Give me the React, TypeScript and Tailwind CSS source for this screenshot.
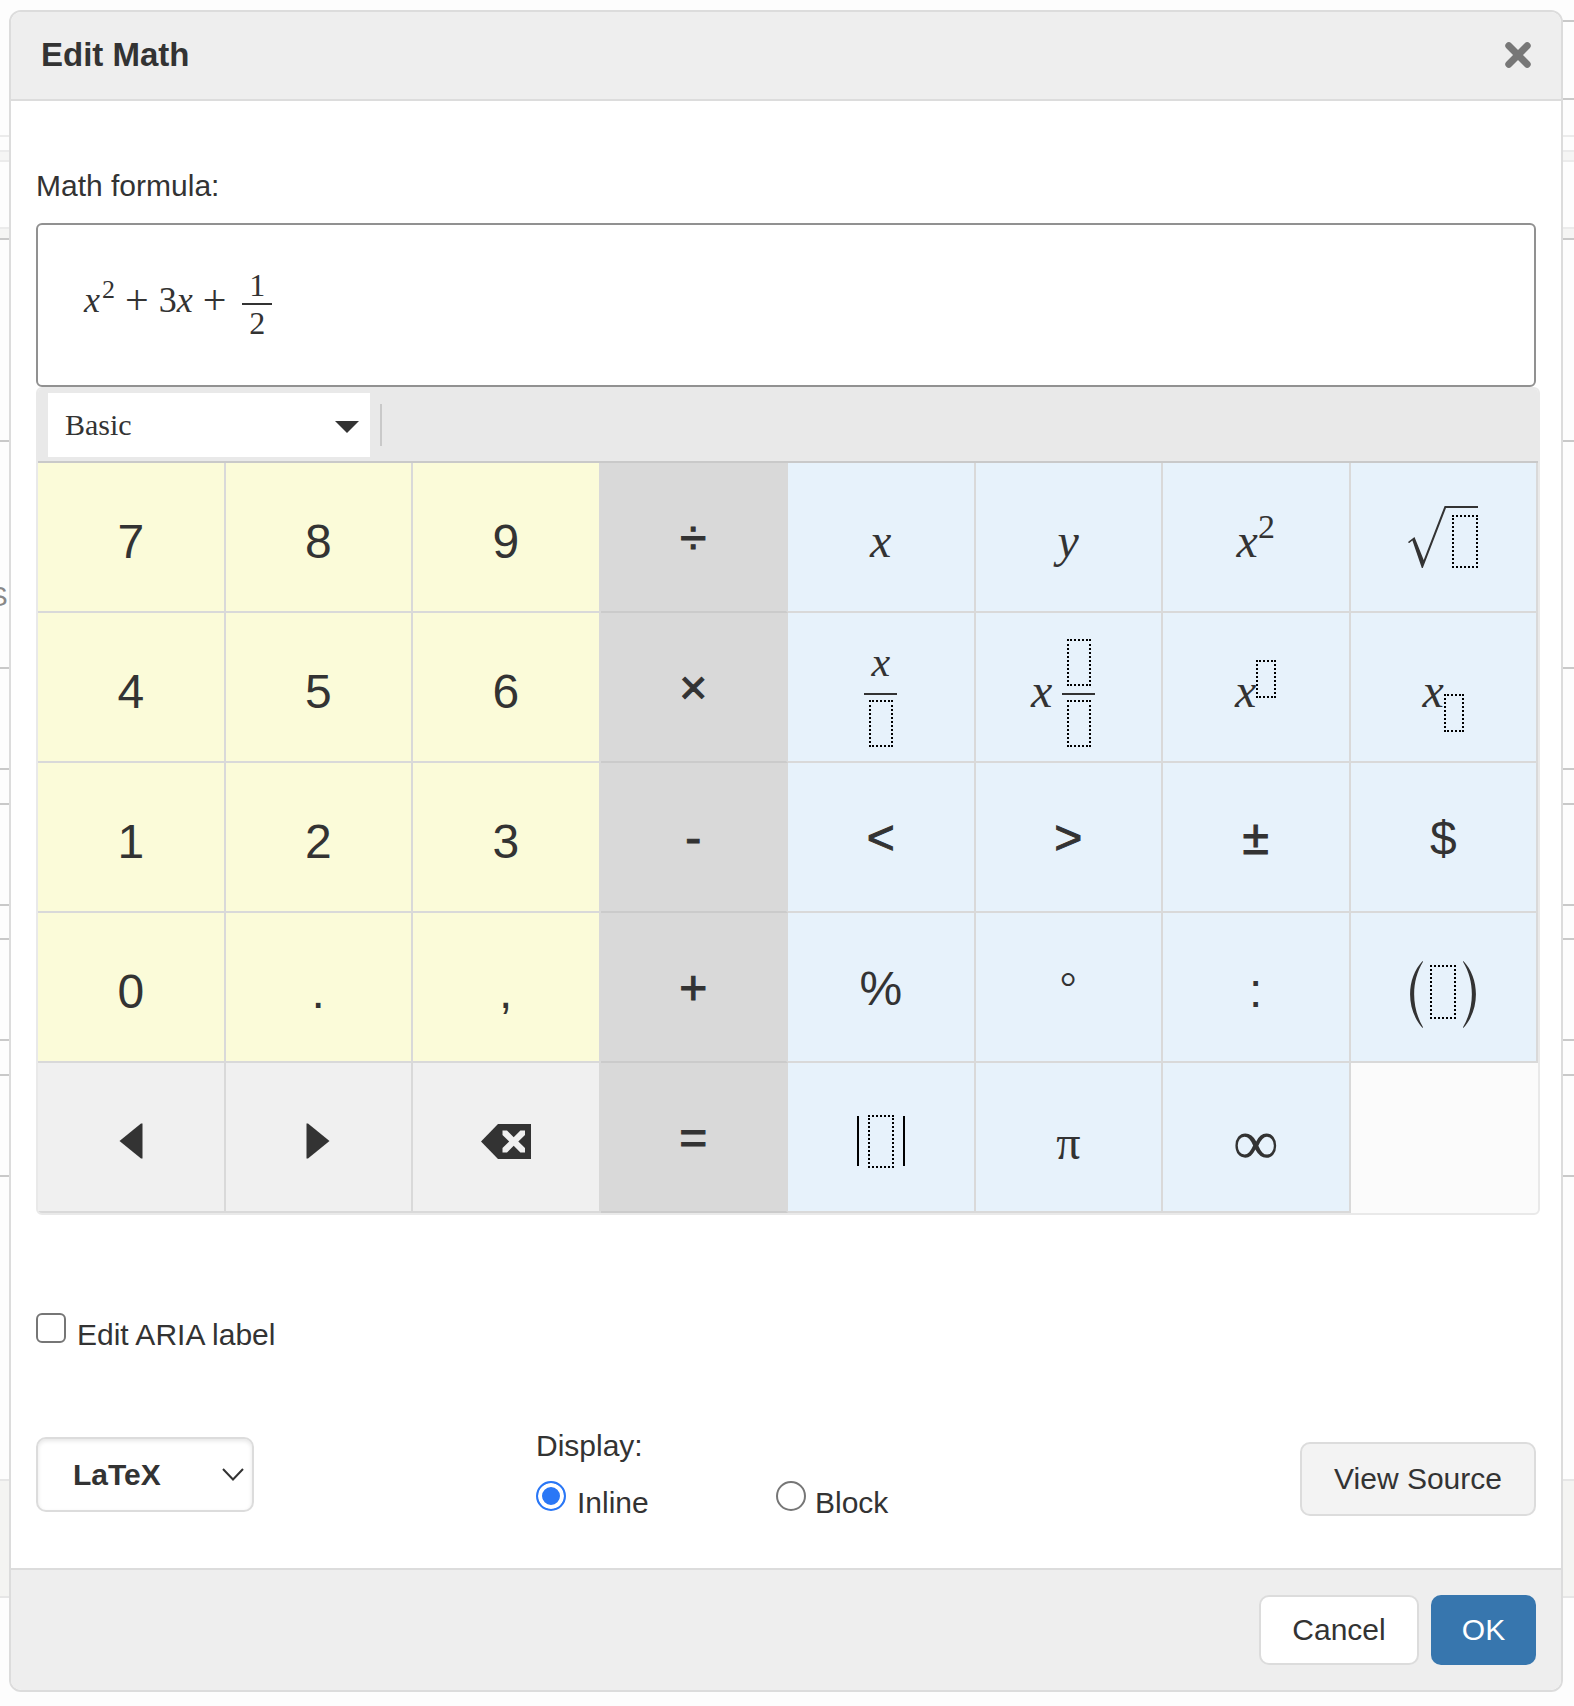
import React, { useState } from 'react';

interface KeyDef {
  id: string;
  label: React.ReactNode;
  kind: 'digit' | 'operator' | 'symbol' | 'nav';
}

const kindStyles = {
  digit: 'bg-[#fbfbd9] border-[#d9d9d9] pt-[10px]',
  operator: 'bg-[#d9d9d9] border-r-[#d9d9d9] border-b-[#cbcbcb]',
  symbol: 'bg-[#e7f2fb] border-[#d9d9d9]',
  nav: 'bg-[#f0f0f0] border-[#d9d9d9] pt-2',
};

const Serif = ({ children, className = '' }: { children: React.ReactNode; className?: string }) => (
  <span className={`font-['Liberation_Serif',serif] ${className}`}>{children}</span>
);

const Sign = ({ children }: { children: React.ReactNode }) => (
  <span className="pt-[2px] [-webkit-text-stroke:1px_#333]">{children}</span>
);

const Slot = ({ className }: { className: string }) => (
  <span className={`block shrink-0 border-2 border-dotted border-black ${className}`} />
);

const SqrtKey = () => (
  <span className="flex items-end">
    <svg width="38" height="62" viewBox="0 0 38 62" fill="#333">
      <path d="M0 36 L6.5 31 L15.7 54 L36.6 0 H38 V2 L14.8 62 H13.8 L4.4 34.5 L1 37.2 Z" />
    </svg>
    <span className="block h-[62px] border-t-2 border-[#333] pt-[7px] pl-[6px]">
      <Slot className="h-[53px] w-[26px]" />
    </span>
  </span>
);

const Fraction = ({ top }: { top: React.ReactNode }) => (
  <span className="flex flex-col items-center">
    {top}
    <span className="mt-[7px] mb-[5px] block h-[2px] w-[33px] bg-[#333]" />
    <Slot className="h-[47px] w-6" />
  </span>
);

const ParenKey = () => (
  <span className="flex items-center gap-[7px] pt-[14px]">
    <svg width="13" height="67" viewBox="0 0 13 67" fill="#333">
      <path d="M12.6 0 C-3.6 17 -4.6 48 12.6 67 L13 66.3 C1.2 46 1.2 20 13 0.8 Z" />
    </svg>
    <Slot className="mb-1 h-[54px] w-[26px]" />
    <svg width="13" height="67" viewBox="0 0 13 67" fill="#333">
      <path d="M0.4 0 C16.6 17 17.6 48 0.4 67 L0 66.3 C11.8 46 11.8 20 0 0.8 Z" />
    </svg>
  </span>
);

const AbsKey = () => (
  <span className="flex items-center gap-[9px] pt-2">
    <span className="block h-[50px] w-[2px] bg-black" />
    <Slot className="h-[53px] w-[26px]" />
    <span className="block h-[50px] w-[2px] bg-black" />
  </span>
);

const LeftArrow = () => (
  <svg width="24" height="36" viewBox="0 0 24 36" fill="#333">
    <path d="M23.5 0.5 V35.5 H22 L0.5 18 L22 0.5 Z" />
  </svg>
);

const RightArrow = () => (
  <svg width="24" height="36" viewBox="0 0 24 36" fill="#333">
    <path d="M0.5 0.5 V35.5 H2 L23.5 18 L2 0.5 Z" />
  </svg>
);

const BackspaceIcon = () => (
  <svg width="50" height="35" viewBox="0 0 50 35">
    <path d="M0 17.5 L17 0 H50 V35 H17 Z" fill="#333" />
    <path
      d="M21.5 6.5 H26 L32.7 13.2 L39.4 6.5 H44 V11 L37.3 17.5 L44 24 V28.5 H39.4 L32.7 21.8 L26 28.5 H21.5 V24 L28.2 17.5 L21.5 11 Z"
      fill="#f0f0f0"
    />
  </svg>
);

const keys: KeyDef[] = [
  { id: '7', label: '7', kind: 'digit' },
  { id: '8', label: '8', kind: 'digit' },
  { id: '9', label: '9', kind: 'digit' },
  { id: 'divide', label: <Sign>÷</Sign>, kind: 'operator' },
  { id: 'x', label: <Serif className="pt-2 italic">x</Serif>, kind: 'symbol' },
  { id: 'y', label: <Serif className="pt-2 italic">y</Serif>, kind: 'symbol' },
  {
    id: 'x squared',
    label: (
      <span className="flex items-center pt-2">
        <Serif className="italic">x</Serif>
        <Serif className="pb-7 text-[34px]">2</Serif>
      </span>
    ),
    kind: 'symbol',
  },
  { id: 'square root', label: <SqrtKey />, kind: 'symbol' },

  { id: '4', label: '4', kind: 'digit' },
  { id: '5', label: '5', kind: 'digit' },
  { id: '6', label: '6', kind: 'digit' },
  { id: 'multiply', label: <Sign>×</Sign>, kind: 'operator' },
  {
    id: 'fraction',
    label: (
      <span className="pt-3">
        <Fraction top={<Serif className="h-[47px] text-[42px] leading-[47px] italic">x</Serif>} />
      </span>
    ),
    kind: 'symbol',
  },
  {
    id: 'mixed fraction',
    label: (
      <span className="flex items-center gap-[10px] pt-3 pr-[10px]">
        <Serif className="pb-1 italic">x</Serif>
        <Fraction top={<Slot className="h-[47px] w-6" />} />
      </span>
    ),
    kind: 'symbol',
  },
  {
    id: 'superscript',
    label: (
      <span className="flex items-center pt-2">
        <Serif className="italic">x</Serif>
        <Slot className="mb-6 h-[38px] w-5" />
      </span>
    ),
    kind: 'symbol',
  },
  {
    id: 'subscript',
    label: (
      <span className="flex items-center pt-2">
        <Serif className="italic">x</Serif>
        <Slot className="mt-11 h-[38px] w-5" />
      </span>
    ),
    kind: 'symbol',
  },

  { id: '1', label: '1', kind: 'digit' },
  { id: '2', label: '2', kind: 'digit' },
  { id: '3', label: '3', kind: 'digit' },
  { id: 'minus', label: <Sign>-</Sign>, kind: 'operator' },
  { id: 'less than', label: <Sign>&lt;</Sign>, kind: 'symbol' },
  { id: 'greater than', label: <Sign>&gt;</Sign>, kind: 'symbol' },
  { id: 'plus or minus', label: <Sign>±</Sign>, kind: 'symbol' },
  { id: 'dollar', label: <span className="pt-1">$</span>, kind: 'symbol' },

  { id: '0', label: '0', kind: 'digit' },
  { id: 'point', label: '.', kind: 'digit' },
  { id: 'comma', label: ',', kind: 'digit' },
  { id: 'plus', label: <Sign>+</Sign>, kind: 'operator' },
  { id: 'percent', label: <span className="pt-1">%</span>, kind: 'symbol' },
  { id: 'degree', label: <Serif className="text-[42px]">°</Serif>, kind: 'symbol' },
  { id: 'colon', label: <span className="pt-2">:</span>, kind: 'symbol' },
  { id: 'parentheses', label: <ParenKey />, kind: 'symbol' },

  { id: 'move left', label: <LeftArrow />, kind: 'nav' },
  { id: 'move right', label: <RightArrow />, kind: 'nav' },
  { id: 'backspace', label: <BackspaceIcon />, kind: 'nav' },
  { id: 'equals', label: <Sign>=</Sign>, kind: 'operator' },
  { id: 'absolute value', label: <AbsKey />, kind: 'symbol' },
  { id: 'pi', label: <Serif className="pt-3">π</Serif>, kind: 'symbol' },
  { id: 'infinity', label: <Serif className="pt-3 text-[64px]">∞</Serif>, kind: 'symbol' },
];

// Form behind the dialog, only its edges stay visible
const Backdrop = () => (
  <div aria-hidden="true" className="absolute inset-0 flex flex-col overflow-hidden">
    <div className="ml-auto flex h-[135px] w-1/2 flex-col pt-5">
      <div className="h-20 border-y-2 border-[#c9c9c9]" />
    </div>
    <div className="h-[15px] border-t-2 border-[#ebebeb]" />
    <div className="h-3 border-y-2 border-[#ebebeb] bg-[#f5f5f4]" />
    <div className="h-[65px]" />
    <div className="h-[13px] border-t-2 border-b-2 border-t-[#ebebeb] border-b-[#c9c9c9] bg-[#f5f5f4]" />
    <div className="h-[200px]" />
    <div className="flex h-[227px] items-center border-t-2 border-[#c9c9c9] pt-[84px]">
      <span className="-ml-[11px] text-[28px] text-[#888]">S</span>
    </div>
    <div className="h-[101px] border-t-2 border-[#c9c9c9]" />
    <div className="h-[35px] border-t-2 border-[#c9c9c9]" />
    <div className="h-[101px] border-t-2 border-[#c9c9c9]" />
    <div className="h-[34px] border-t-2 border-[#c9c9c9]" />
    <div className="h-[101px] border-t-2 border-[#c9c9c9]" />
    <div className="h-[35px] border-t-2 border-[#c9c9c9]" />
    <div className="h-[103px] border-y-2 border-[#c9c9c9]" />
    <div className="h-[302px]" />
    <div className="h-[119px] border-y-2 border-[#e6e6e6] bg-[#f4f4f2]" />
  </div>
);

const Formula = () => (
  <div className="flex items-center pb-[2px] font-['Liberation_Serif',serif] text-[36px]">
    <span className="pb-2 italic">x</span>
    <span className="pb-7 pl-[2px] text-[26px]">2</span>
    <span className="px-[10px] pb-2 text-[42px]">+</span>
    <span className="pb-2">3</span>
    <span className="pb-2 italic">x</span>
    <span className="px-[10px] pb-2 text-[42px]">+</span>
    <span className="ml-[6px] flex flex-col text-center text-[32px] leading-8">
      <span>1</span>
      <span className="my-[2px] block h-[2px] w-[30px] bg-[#333]" />
      <span>2</span>
    </span>
  </div>
);

export default function App() {
  const [category, setCategory] = useState('Basic');
  const [format, setFormat] = useState('LaTeX');
  const [editAria, setEditAria] = useState(false);
  const [display, setDisplay] = useState('inline');

  return (
    <div className="relative bg-[#fdfdfd] pt-[10px] pr-[11px] pb-[14px] pl-[9px] font-['Liberation_Sans',Arial,sans-serif] text-[30px] leading-9 text-[#333]">
      <Backdrop />

      <div role="dialog" aria-labelledby="dialog-title" className="relative overflow-hidden rounded-xl border-2 border-[#dcdcdc] bg-white">
        <div className="flex h-[89px] items-center justify-between border-b-2 border-[#dcdcdc] bg-[#eee] px-[30px] pb-[2px]">
          <h1 id="dialog-title" className="text-[33px] font-bold">Edit Math</h1>
          <button aria-label="Close">
            <svg width="26" height="26" viewBox="0 0 26 26" stroke="#777" strokeWidth="7" strokeLinecap="round">
              <path d="M3.8 3.8 L22.2 22.2 M22.2 3.8 L3.8 22.2" />
            </svg>
          </button>
        </div>

        <div className="px-[25px] pt-[67px] pb-[47px]">
          <div id="formula-label">Math formula:</div>
          <div
            role="textbox"
            tabIndex={0}
            aria-labelledby="formula-label"
            className="mt-[19px] flex h-[164px] items-center rounded-md border-2 border-[#919191] bg-white pl-[46px]"
          >
            <Formula />
          </div>

          <div className="-mr-1 overflow-hidden rounded-md border-2 border-[#e9e9e9] bg-[#fbfbfb]">
            <div className="flex h-[74px] items-center border-b-2 border-[#c9c9c9] bg-[#e9e9e9] pl-[10px]">
              <div className="relative">
                <select
                  aria-label="Category"
                  value={category}
                  onChange={(e) => setCategory(e.target.value)}
                  className="h-16 w-[322px] appearance-none bg-white pl-[17px] font-['Liberation_Serif',serif]"
                >
                  <option>Basic</option>
                </select>
                <svg className="pointer-events-none absolute top-7 right-[11px]" width="24" height="12" viewBox="0 0 24 12" fill="#333">
                  <path d="M0 0 H24 L12 12 Z" />
                </svg>
              </div>
              <span className="ml-[10px] block h-[42px] w-[2px] bg-[#c9c9c9]" />
            </div>

            <div className="grid grid-cols-8 text-[48px]">
              {keys.map((key) => (
                <button
                  key={key.id}
                  aria-label={key.id}
                  className={`flex h-[150px] items-center justify-center border-r-2 border-b-2 ${kindStyles[key.kind]}`}
                >
                  {key.label}
                </button>
              ))}
            </div>
          </div>

          <label className="mt-[98px] flex w-fit items-start gap-[11px]">
            <input
              type="checkbox"
              checked={editAria}
              onChange={(e) => setEditAria(e.target.checked)}
              className="size-[30px] appearance-none rounded-md border-2 border-[#767676] bg-white checked:bg-[#2a77f6]"
            />
            <span className="pt-1">Edit ARIA label</span>
          </label>

          <div className="mt-[75px] grid grid-cols-3 items-center">
            <div className="relative w-fit">
              <select
                aria-label="Format"
                value={format}
                onChange={(e) => setFormat(e.target.value)}
                className="h-[75px] w-[218px] appearance-none rounded-[10px] border-2 border-[#dcdcdc] bg-white pl-[35px] font-bold shadow-[inset_0_2px_4px_rgba(0,0,0,0.1)]"
              >
                <option>LaTeX</option>
              </select>
              <svg className="pointer-events-none absolute top-[31px] right-[10px]" width="22" height="13" viewBox="0 0 22 13" fill="none" stroke="#333" strokeWidth="2">
                <path d="M1 1 L11 11.5 L21 1" />
              </svg>
            </div>

            <fieldset>
              <legend>Display:</legend>
              <div className="mt-[17px] flex">
                <label className="flex w-60 items-start gap-[11px]">
                  <input
                    type="radio"
                    name="display"
                    checked={display === 'inline'}
                    onChange={() => setDisplay('inline')}
                    className="size-[30px] appearance-none rounded-full border-2 border-[#767676] bg-white checked:border-[#2a77f6] checked:bg-[#2a77f6] checked:shadow-[inset_0_0_0_4px_#fff]"
                  />
                  <span className="pt-1">Inline</span>
                </label>
                <label className="flex items-start gap-[9px]">
                  <input
                    type="radio"
                    name="display"
                    checked={display === 'block'}
                    onChange={() => setDisplay('block')}
                    className="size-[30px] appearance-none rounded-full border-2 border-[#767676] bg-white checked:border-[#2a77f6] checked:bg-[#2a77f6] checked:shadow-[inset_0_0_0_4px_#fff]"
                  />
                  <span className="pt-1">Block</span>
                </label>
              </div>
            </fieldset>

            <button className="mt-2 h-[74px] w-[236px] justify-self-end rounded-[10px] border-2 border-[#dcdcdc] bg-[#f3f3f3]">
              View Source
            </button>
          </div>
        </div>

        <div className="flex justify-end gap-3 border-t-2 border-[#dcdcdc] bg-[#eee] p-[25px]">
          <button className="h-[70px] w-40 rounded-[10px] border-2 border-[#dcdcdc] bg-white">Cancel</button>
          <button className="h-[70px] w-[105px] rounded-[10px] bg-[#3776ae] text-white">OK</button>
        </div>
      </div>
    </div>
  );
}
